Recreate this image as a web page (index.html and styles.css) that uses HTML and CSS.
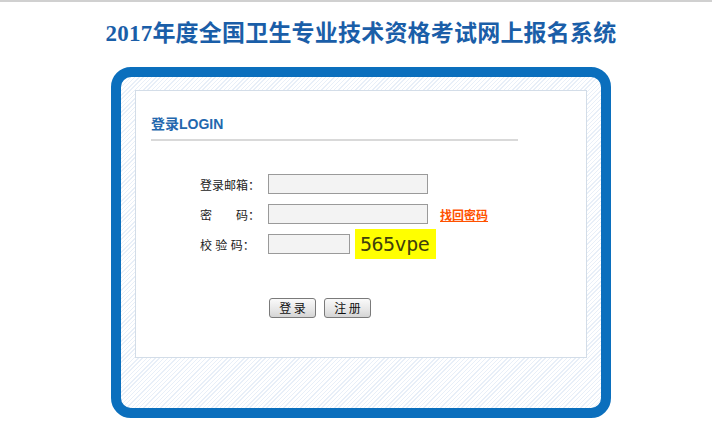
FILE: index.html
```html
<!DOCTYPE html>
<html lang="zh-CN">
<head>
    <meta charset="UTF-8">
    <title>2017年度全国卫生专业技术资格考试网上报名系统</title>
    <link rel="stylesheet" href="styles.css">
</head>
<body>
    <div class="page">
        <h1 class="title">2017年度全国卫生专业技术资格考试网上报名系统</h1>
        <div class="login-box">
            <div class="login-panel">
                <h2 class="login-head">登录LOGIN</h2>
                <form class="login-form">
                    <div class="row">
                        <label for="email">登录邮箱：</label>
                        <input type="text" id="email" class="field">
                    </div>
                    <div class="row">
                        <label for="pwd">密　　码：</label>
                        <input type="password" id="pwd" class="field">
                        <a href="#" class="forgot">找回密码</a>
                    </div>
                    <div class="row">
                        <label for="code">校 验 码：</label>
                        <input type="text" id="code" class="field short">
                        <span class="captcha">565vpe</span>
                    </div>
                    <div class="buttons">
                        <button type="button" class="btn">登 录</button>
                        <button type="button" class="btn">注 册</button>
                    </div>
                </form>
            </div>
        </div>
    </div>
</body>
</html>
```

FILE: styles.css
```css
body {
    margin: 0;
    border-top: 2px solid #d0d0d0;
    font-family: "Liberation Sans", "Noto Sans CJK SC", sans-serif;
    font-size: 12px;
    color: #222;
    background: #fff;
}
.page {
    width: 500px;
    margin-left: calc(50% - 245px);
}
.title {
    margin: 0 -20px;
    padding-top: 18px;
    height: 65px;
    box-sizing: border-box;
    text-align: center;
    font-family: "Liberation Serif", "Noto Sans CJK SC", serif;
    font-size: 23px;
    font-weight: bold;
    letter-spacing: 0.2px;
    color: #1a5ea8;
    white-space: nowrap;
    line-height: 28px;
}
.login-box {
    width: 500px;
    height: 351px;
    box-sizing: border-box;
    border: 10px solid #0b6fbd;
    border-radius: 20px;
    padding: 13px 14px;
    background: repeating-linear-gradient(-45deg, #fff 0, #fff 2px, #e8eff8 2px, #e8eff8 3px);
}
.login-panel {
    height: 268px;
    box-sizing: border-box;
    border: 1px solid #d3dde8;
    background: #fff;
    padding: 24px 15px 0;
}
.login-head {
    margin: 0;
    width: 367px;
    padding-bottom: 6px;
    border-bottom: 2px solid #d9d9d9;
    font-size: 14px;
    line-height: 18px;
    color: #2367ad;
    font-weight: bold;
}
.login-form {
    padding: 28px 0 0 49px;
}
.row {
    display: flex;
    align-items: center;
    height: 30px;
}
.row label {
    width: 68px;
    font-size: 12px;
    color: #222;
}
.field {
    width: 160px;
    height: 20px;
    box-sizing: border-box;
    margin: 0;
    border: 1px solid #9a9a9a;
    background: #f3f3f3;
}
.field.short {
    width: 82px;
}
.forgot {
    margin-left: 12px;
    color: #ff5200;
    font-weight: bold;
    font-size: 12px;
}
.captcha {
    margin-left: 5px;
    width: 81px;
    height: 30px;
    line-height: 30px;
    padding-left: 5px;
    box-sizing: border-box;
    background: #ffff00;
    color: #3f3f0c;
    font-family: "DejaVu Sans Mono", monospace;
    font-size: 20px;
    letter-spacing: -0.5px;
}
.buttons {
    display: flex;
    gap: 8px;
    padding: 39px 0 0 69px;
}
.btn {
    width: 47px;
    height: 20px;
    padding: 0;
    border: 1px solid #7a7a7a;
    border-radius: 3px;
    background: linear-gradient(#fafafa, #e6e6e6 60%, #d4d4d4);
    font-family: "Noto Sans CJK SC", sans-serif;
    font-size: 12px;
    line-height: 18px;
    color: #111;
}
```
